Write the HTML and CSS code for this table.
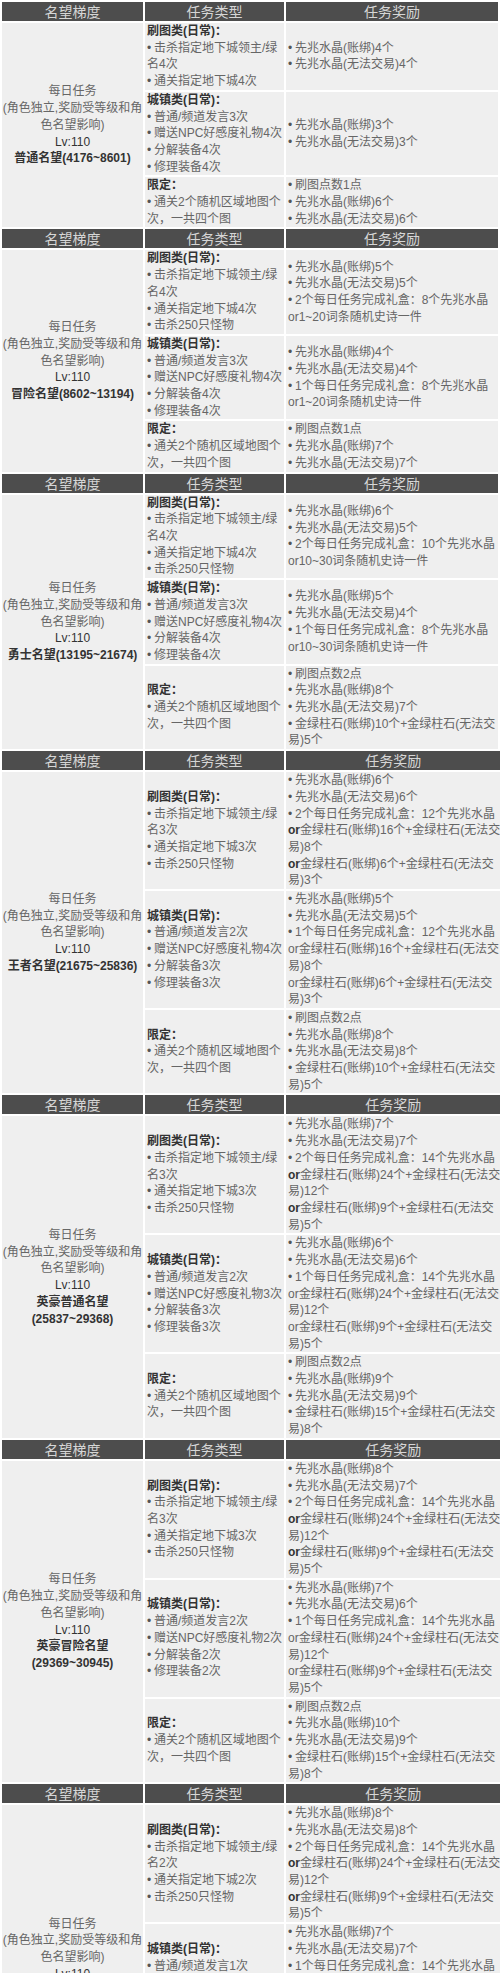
FILE: index.html
```html
<!DOCTYPE html>
<html lang="zh-CN">
<head>
<meta charset="utf-8">
<title>名望每日任务</title>
<link rel="stylesheet" href="styles.css">
</head>
<body>
<div class="table">

<section class="tier">
  <div class="th">名望梯度</div><div class="th">任务类型</div><div class="th">任务奖励</div>
  <div class="cell rank"><div><p>每日任务</p><p>(角色独立,奖励受等级和角<br>色名望影响)</p><p class="lv">Lv:110</p><p class="name">普通名望(4176~8601)</p></div></div>
  <div class="cell"><div><p class="h">刷图类(日常)：</p><p class="i">击杀指定地下城领主/绿<br>名4次</p><p class="i">通关指定地下城4次</p></div></div>
  <div class="cell"><div><p class="i">先兆水晶(账绑)4个</p><p class="i">先兆水晶(无法交易)4个</p></div></div>
  <div class="cell"><div><p class="h">城镇类(日常)：</p><p class="i">普通/频道发言3次</p><p class="i">赠送NPC好感度礼物4次</p><p class="i">分解装备4次</p><p class="i">修理装备4次</p></div></div>
  <div class="cell"><div><p class="i">先兆水晶(账绑)3个</p><p class="i">先兆水晶(无法交易)3个</p></div></div>
  <div class="cell"><div><p class="h">限定：</p><p class="i">通关2个随机区域地图个<br>次，一共四个图</p></div></div>
  <div class="cell"><div><p class="i">刷图点数1点</p><p class="i">先兆水晶(账绑)6个</p><p class="i">先兆水晶(无法交易)6个</p></div></div>
</section>

<section class="tier">
  <div class="th">名望梯度</div><div class="th">任务类型</div><div class="th">任务奖励</div>
  <div class="cell rank"><div><p>每日任务</p><p>(角色独立,奖励受等级和角<br>色名望影响)</p><p class="lv">Lv:110</p><p class="name">冒险名望(8602~13194)</p></div></div>
  <div class="cell"><div><p class="h">刷图类(日常)：</p><p class="i">击杀指定地下城领主/绿<br>名4次</p><p class="i">通关指定地下城4次</p><p class="i">击杀250只怪物</p></div></div>
  <div class="cell"><div><p class="i">先兆水晶(账绑)5个</p><p class="i">先兆水晶(无法交易)5个</p><p class="i">2个每日任务完成礼盒：8个先兆水晶<br>or1~20词条随机史诗一件</p></div></div>
  <div class="cell"><div><p class="h">城镇类(日常)：</p><p class="i">普通/频道发言3次</p><p class="i">赠送NPC好感度礼物4次</p><p class="i">分解装备4次</p><p class="i">修理装备4次</p></div></div>
  <div class="cell"><div><p class="i">先兆水晶(账绑)4个</p><p class="i">先兆水晶(无法交易)4个</p><p class="i">1个每日任务完成礼盒：8个先兆水晶<br>or1~20词条随机史诗一件</p></div></div>
  <div class="cell"><div><p class="h">限定：</p><p class="i">通关2个随机区域地图个<br>次，一共四个图</p></div></div>
  <div class="cell"><div><p class="i">刷图点数1点</p><p class="i">先兆水晶(账绑)7个</p><p class="i">先兆水晶(无法交易)7个</p></div></div>
</section>

<section class="tier">
  <div class="th">名望梯度</div><div class="th">任务类型</div><div class="th">任务奖励</div>
  <div class="cell rank"><div><p>每日任务</p><p>(角色独立,奖励受等级和角<br>色名望影响)</p><p class="lv">Lv:110</p><p class="name">勇士名望(13195~21674)</p></div></div>
  <div class="cell"><div><p class="h">刷图类(日常)：</p><p class="i">击杀指定地下城领主/绿<br>名4次</p><p class="i">通关指定地下城4次</p><p class="i">击杀250只怪物</p></div></div>
  <div class="cell"><div><p class="i">先兆水晶(账绑)6个</p><p class="i">先兆水晶(无法交易)5个</p><p class="i">2个每日任务完成礼盒：10个先兆水晶<br>or10~30词条随机史诗一件</p></div></div>
  <div class="cell"><div><p class="h">城镇类(日常)：</p><p class="i">普通/频道发言3次</p><p class="i">赠送NPC好感度礼物4次</p><p class="i">分解装备4次</p><p class="i">修理装备4次</p></div></div>
  <div class="cell"><div><p class="i">先兆水晶(账绑)5个</p><p class="i">先兆水晶(无法交易)4个</p><p class="i">1个每日任务完成礼盒：8个先兆水晶<br>or10~30词条随机史诗一件</p></div></div>
  <div class="cell"><div><p class="h">限定：</p><p class="i">通关2个随机区域地图个<br>次，一共四个图</p></div></div>
  <div class="cell"><div><p class="i">刷图点数2点</p><p class="i">先兆水晶(账绑)8个</p><p class="i">先兆水晶(无法交易)7个</p><p class="i">金绿柱石(账绑)10个+金绿柱石(无法交<br>易)5个</p></div></div>
</section>

<section class="tier">
  <div class="th">名望梯度</div><div class="th">任务类型</div><div class="th">任务奖励</div>
  <div class="cell rank"><div><p>每日任务</p><p>(角色独立,奖励受等级和角<br>色名望影响)</p><p class="lv">Lv:110</p><p class="name">王者名望(21675~25836)</p></div></div>
  <div class="cell"><div><p class="h">刷图类(日常)：</p><p class="i">击杀指定地下城领主/绿<br>名3次</p><p class="i">通关指定地下城3次</p><p class="i">击杀250只怪物</p></div></div>
  <div class="cell"><div><p class="i">先兆水晶(账绑)6个</p><p class="i">先兆水晶(无法交易)6个</p><p class="i">2个每日任务完成礼盒：12个先兆水晶</p><p><b>or</b>金绿柱石(账绑)16个+金绿柱石(无法交<br>易)8个</p><p><b>or</b>金绿柱石(账绑)6个+金绿柱石(无法交<br>易)3个</p></div></div>
  <div class="cell"><div><p class="h">城镇类(日常)：</p><p class="i">普通/频道发言2次</p><p class="i">赠送NPC好感度礼物4次</p><p class="i">分解装备3次</p><p class="i">修理装备3次</p></div></div>
  <div class="cell"><div><p class="i">先兆水晶(账绑)5个</p><p class="i">先兆水晶(无法交易)5个</p><p class="i">1个每日任务完成礼盒：12个先兆水晶</p><p>or金绿柱石(账绑)16个+金绿柱石(无法交<br>易)8个</p><p>or金绿柱石(账绑)6个+金绿柱石(无法交<br>易)3个</p></div></div>
  <div class="cell"><div><p class="h">限定：</p><p class="i">通关2个随机区域地图个<br>次，一共四个图</p></div></div>
  <div class="cell"><div><p class="i">刷图点数2点</p><p class="i">先兆水晶(账绑)8个</p><p class="i">先兆水晶(无法交易)8个</p><p class="i">金绿柱石(账绑)10个+金绿柱石(无法交<br>易)5个</p></div></div>
</section>

<section class="tier">
  <div class="th">名望梯度</div><div class="th">任务类型</div><div class="th">任务奖励</div>
  <div class="cell rank"><div><p>每日任务</p><p>(角色独立,奖励受等级和角<br>色名望影响)</p><p class="lv">Lv:110</p><p class="name">英豪普通名望<br>(25837~29368)</p></div></div>
  <div class="cell"><div><p class="h">刷图类(日常)：</p><p class="i">击杀指定地下城领主/绿<br>名3次</p><p class="i">通关指定地下城3次</p><p class="i">击杀250只怪物</p></div></div>
  <div class="cell"><div><p class="i">先兆水晶(账绑)7个</p><p class="i">先兆水晶(无法交易)7个</p><p class="i">2个每日任务完成礼盒：14个先兆水晶</p><p><b>or</b>金绿柱石(账绑)24个+金绿柱石(无法交<br>易)12个</p><p><b>or</b>金绿柱石(账绑)9个+金绿柱石(无法交<br>易)5个</p></div></div>
  <div class="cell"><div><p class="h">城镇类(日常)：</p><p class="i">普通/频道发言2次</p><p class="i">赠送NPC好感度礼物3次</p><p class="i">分解装备3次</p><p class="i">修理装备3次</p></div></div>
  <div class="cell"><div><p class="i">先兆水晶(账绑)6个</p><p class="i">先兆水晶(无法交易)6个</p><p class="i">1个每日任务完成礼盒：14个先兆水晶</p><p>or金绿柱石(账绑)24个+金绿柱石(无法交<br>易)12个</p><p>or金绿柱石(账绑)9个+金绿柱石(无法交<br>易)5个</p></div></div>
  <div class="cell"><div><p class="h">限定：</p><p class="i">通关2个随机区域地图个<br>次，一共四个图</p></div></div>
  <div class="cell"><div><p class="i">刷图点数2点</p><p class="i">先兆水晶(账绑)9个</p><p class="i">先兆水晶(无法交易)9个</p><p class="i">金绿柱石(账绑)15个+金绿柱石(无法交<br>易)8个</p></div></div>
</section>

<section class="tier">
  <div class="th">名望梯度</div><div class="th">任务类型</div><div class="th">任务奖励</div>
  <div class="cell rank"><div><p>每日任务</p><p>(角色独立,奖励受等级和角<br>色名望影响)</p><p class="lv">Lv:110</p><p class="name">英豪冒险名望<br>(29369~30945)</p></div></div>
  <div class="cell"><div><p class="h">刷图类(日常)：</p><p class="i">击杀指定地下城领主/绿<br>名3次</p><p class="i">通关指定地下城3次</p><p class="i">击杀250只怪物</p></div></div>
  <div class="cell"><div><p class="i">先兆水晶(账绑)8个</p><p class="i">先兆水晶(无法交易)7个</p><p class="i">2个每日任务完成礼盒：14个先兆水晶</p><p><b>or</b>金绿柱石(账绑)24个+金绿柱石(无法交<br>易)12个</p><p><b>or</b>金绿柱石(账绑)9个+金绿柱石(无法交<br>易)5个</p></div></div>
  <div class="cell"><div><p class="h">城镇类(日常)：</p><p class="i">普通/频道发言2次</p><p class="i">赠送NPC好感度礼物2次</p><p class="i">分解装备2次</p><p class="i">修理装备2次</p></div></div>
  <div class="cell"><div><p class="i">先兆水晶(账绑)7个</p><p class="i">先兆水晶(无法交易)6个</p><p class="i">1个每日任务完成礼盒：14个先兆水晶</p><p>or金绿柱石(账绑)24个+金绿柱石(无法交<br>易)12个</p><p>or金绿柱石(账绑)9个+金绿柱石(无法交<br>易)5个</p></div></div>
  <div class="cell"><div><p class="h">限定：</p><p class="i">通关2个随机区域地图个<br>次，一共四个图</p></div></div>
  <div class="cell"><div><p class="i">刷图点数2点</p><p class="i">先兆水晶(账绑)10个</p><p class="i">先兆水晶(无法交易)9个</p><p class="i">金绿柱石(账绑)15个+金绿柱石(无法交<br>易)8个</p></div></div>
</section>

<section class="tier">
  <div class="th">名望梯度</div><div class="th">任务类型</div><div class="th">任务奖励</div>
  <div class="cell rank"><div><p>每日任务</p><p>(角色独立,奖励受等级和角<br>色名望影响)</p><p class="lv">Lv:110</p><p class="name">英豪勇士名望<br>(30946~32522)</p></div></div>
  <div class="cell"><div><p class="h">刷图类(日常)：</p><p class="i">击杀指定地下城领主/绿<br>名2次</p><p class="i">通关指定地下城2次</p><p class="i">击杀250只怪物</p></div></div>
  <div class="cell"><div><p class="i">先兆水晶(账绑)8个</p><p class="i">先兆水晶(无法交易)8个</p><p class="i">2个每日任务完成礼盒：14个先兆水晶</p><p><b>or</b>金绿柱石(账绑)24个+金绿柱石(无法交<br>易)12个</p><p><b>or</b>金绿柱石(账绑)9个+金绿柱石(无法交<br>易)5个</p></div></div>
  <div class="cell"><div><p class="h">城镇类(日常)：</p><p class="i">普通/频道发言1次</p><p class="i">赠送NPC好感度礼物2次</p><p class="i">分解装备2次</p><p class="i">修理装备2次</p></div></div>
  <div class="cell"><div><p class="i">先兆水晶(账绑)7个</p><p class="i">先兆水晶(无法交易)7个</p><p class="i">1个每日任务完成礼盒：14个先兆水晶</p><p>or金绿柱石(账绑)24个+金绿柱石(无法交<br>易)12个</p><p>or金绿柱石(账绑)9个+金绿柱石(无法交<br>易)5个</p></div></div>
  <div class="cell"><div><p class="h">限定：</p><p class="i">通关2个随机区域地图个<br>次，一共四个图</p></div></div>
  <div class="cell"><div><p class="i">刷图点数2点</p><p class="i">先兆水晶(账绑)10个</p><p class="i">先兆水晶(无法交易)10个</p><p class="i">金绿柱石(账绑)15个+金绿柱石(无法交<br>易)8个</p></div></div>
</section>

</div>
</body>
</html>
```
FILE: styles.css
```css
html, body {
  margin: 0;
  padding: 0;
  background: #ffffff;
}

.table {
  width: 500px;
  box-sizing: border-box;
  padding: 2px;
  font-family: "Liberation Sans", "Noto Sans CJK SC", sans-serif;
  font-size: 12px;
  line-height: 16.7px;
  color: #666666;
}

.tier {
  display: grid;
  grid-template-columns: 141px 139px 1fr;
  column-gap: 2px;
  row-gap: 2px;
  margin-bottom: 2px;
}

.th {
  background: #4d4d4d;
  color: #d6d6d6;
  font-family: "Noto Sans CJK SC", sans-serif;
  font-size: 14px;
  line-height: 19px;
  height: 19px;
  text-align: center;
}

.cell {
  background: #efefef;
  display: flex;
  align-items: center;
  padding: 0 0 0 2px;
  white-space: nowrap;
}

.cell p {
  margin: 0;
}

.cell .h,
.cell b {
  font-weight: bold;
  color: #333333;
}

.cell .i::before {
  content: "•";
  display: inline-block;
  width: 7px;
  color: #555555;
}

.rank {
  grid-row: 2 / span 3;
  justify-content: center;
  text-align: center;
  padding: 0;
}

.rank .lv {
  color: #333333;
}

.rank .name {
  font-weight: bold;
  color: #333333;
}
```
